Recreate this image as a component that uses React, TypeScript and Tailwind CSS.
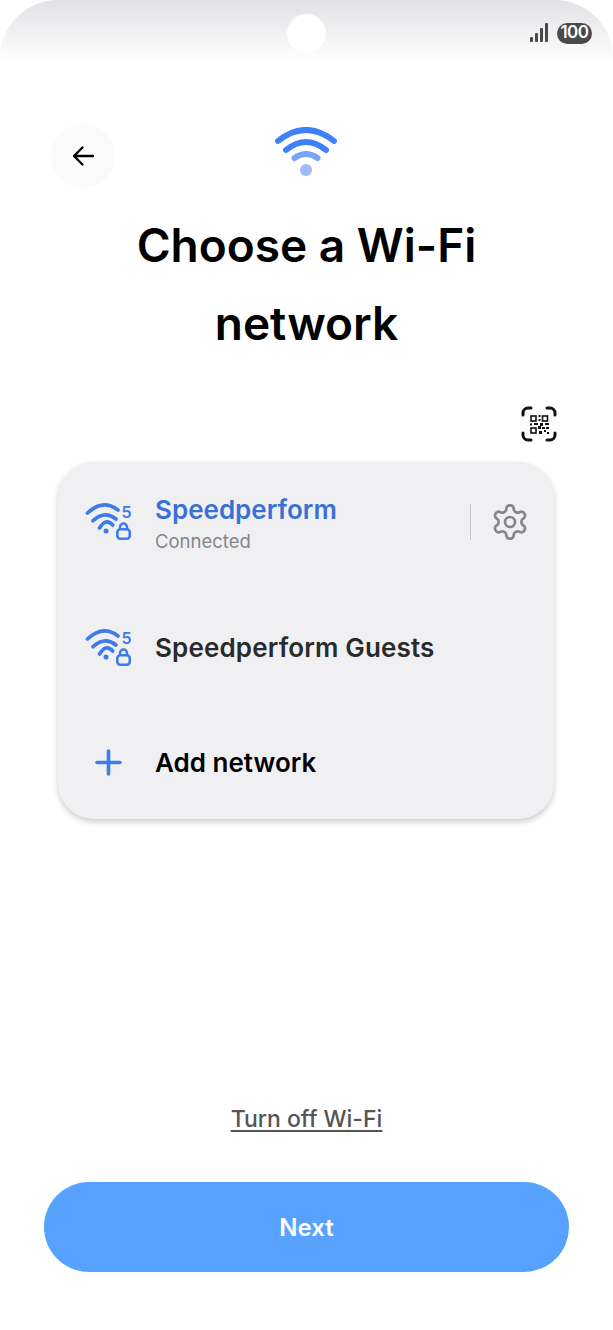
import React from "react";

function WifiFive() {
  return (
    <svg width="48" height="50" viewBox="0 0 48 50" fill="none" className="shrink-0">
      <g stroke="#3c7be8" strokeWidth="3.7" strokeLinecap="round">
        <path d="M2.5 16Q18 1.5 33 13" />
        <path d="M8 23.7Q20 13 31 22" />
        <path d="M14.5 31Q21 20.5 27.7 28" />
      </g>
      <circle cx="21" cy="34" r="2.5" fill="#3c7be8" />
      <text x="36.5" y="21" fill="#3c7be8" fontSize="16" fontWeight="600" fontFamily="Inter, sans-serif">5</text>
      <rect x="32.3" y="32.3" width="12.5" height="9.5" rx="3" stroke="#3c7be8" strokeWidth="2.6" />
      <path d="M35 32v-2a3.5 3.5 0 0 1 7 0v2" stroke="#3c7be8" strokeWidth="2.4" />
    </svg>
  );
}

function QrIcon() {
  return (
    <svg width="36" height="36" viewBox="0 0 36 36" fill="none">
      <g stroke="#111" strokeWidth="3" strokeLinecap="round">
        <path d="M2 9V7a5 5 0 0 1 5-5h3" />
        <path d="M26 2h3a5 5 0 0 1 5 5v2" />
        <path d="M34 27v2a5 5 0 0 1-5 5h-3" />
        <path d="M10 34H7a5 5 0 0 1-5-5v-2" />
      </g>
      <g stroke="#111" strokeWidth="1.6">
        <rect x="10" y="10" width="5" height="5" />
        <rect x="21.5" y="10" width="5" height="5" />
        <rect x="10" y="22" width="5" height="5" />
      </g>
      <g fill="#111">
        <rect x="17.5" y="9" width="2" height="2" />
        <rect x="17.5" y="13" width="2" height="2" />
        <rect x="9" y="17.5" width="2" height="2" />
        <rect x="13" y="17" width="4" height="2" />
        <rect x="19" y="17" width="3" height="3" />
        <rect x="24" y="17" width="4" height="2" />
        <rect x="17" y="20" width="3" height="3" />
        <rect x="21" y="21" width="3" height="2" />
        <rect x="25" y="21" width="3" height="2" />
        <rect x="18" y="25" width="3" height="3" />
        <rect x="23" y="24" width="2" height="2" />
        <rect x="26" y="26" width="2" height="2" />
      </g>
    </svg>
  );
}

function Gear() {
  return (
    <svg width="40" height="40" viewBox="0 0 24 24" fill="none" stroke="#85858a" strokeWidth="1.6" strokeLinecap="round" strokeLinejoin="round">
      <path d="M12.22 2h-.44a2 2 0 0 0-2 2v.18a2 2 0 0 1-1 1.73l-.43.25a2 2 0 0 1-2 0l-.15-.08a2 2 0 0 0-2.73.73l-.22.38a2 2 0 0 0 .73 2.73l.15.1a2 2 0 0 1 1 1.72v.51a2 2 0 0 1-1 1.74l-.15.09a2 2 0 0 0-.73 2.73l.22.38a2 2 0 0 0 2.73.73l.15-.08a2 2 0 0 1 2 0l.43.25a2 2 0 0 1 1 1.73V20a2 2 0 0 0 2 2h.44a2 2 0 0 0 2-2v-.18a2 2 0 0 1 1-1.73l.43-.25a2 2 0 0 1 2 0l.15.08a2 2 0 0 0 2.73-.73l.22-.39a2 2 0 0 0-.73-2.73l-.15-.08a2 2 0 0 1-1-1.74v-.5a2 2 0 0 1 1-1.74l.15-.09a2 2 0 0 0 .73-2.73l-.22-.38a2 2 0 0 0-2.73-.73l-.15.08a2 2 0 0 1-2 0l-.43-.25a2 2 0 0 1-1-1.73V4a2 2 0 0 0-2-2z" />
      <circle cx="12" cy="12" r="3" />
    </svg>
  );
}

export default function App() {
  return (
    <div className="w-[613px] h-[1330px] bg-white flex flex-col font-['Inter',sans-serif] overflow-hidden">
      {/* status bar */}
      <div className="h-[62px] shrink-0 rounded-t-[58px] bg-gradient-to-b from-[#e2e2e6] to-white grid grid-cols-3 pt-[14px]">
        <div />
        <div className="flex justify-center">
          <div className="w-[39px] h-[39px] rounded-full bg-white" />
        </div>
        <div className="flex justify-end items-center gap-[9px] pr-[21px] h-[38px]">
          <svg width="18" height="20" viewBox="0 0 18 20" fill="#4a4a4c">
            <rect x="0" y="14" width="3" height="5" rx="1" />
            <rect x="5" y="10" width="3" height="9" rx="1" />
            <rect x="10" y="5" width="3" height="14" rx="1" />
            <rect x="15" y="0" width="3" height="19" rx="1" />
          </svg>
          <div className="w-[35px] h-[21px] rounded-full bg-[#4a4a4c] text-white text-[17px] font-semibold flex items-center justify-center tracking-[-0.5px]">
            100
          </div>
        </div>
      </div>

      {/* header */}
      <div className="relative h-[126px] pt-[65px] pr-[2px] shrink-0 flex justify-center">
        <button className="absolute left-[51px] top-[62px] w-[64px] h-[64px] rounded-full bg-[#fbfbfb] flex items-center justify-center">
          <svg width="24" height="24" viewBox="0 0 24 24" fill="none" stroke="#000" strokeWidth="2.3" strokeLinecap="round" strokeLinejoin="round">
            <path d="M22 12H3" />
            <path d="M11.5 3.5L3 12l8.5 8.5" />
          </svg>
        </button>
        <svg width="62" height="50" viewBox="0 0 62 50" fill="none">
          <g strokeWidth="6" strokeLinecap="round">
            <path d="M3 14Q31 -8 59 14" stroke="#3c80fb" />
            <path d="M11 23Q31 7 51 23" stroke="#3c80fb" />
          </g>
          <path d="M19.5 31Q31 23 42.5 31" stroke="#76a4f8" strokeWidth="6" strokeLinecap="round" />
          <circle cx="31" cy="43" r="6" fill="#a0bcf4" />
        </svg>
      </div>

      {/* title */}
      <h1 className="mt-[18px] text-center text-[46px] leading-[78px] font-semibold text-black">
        Choose a Wi-Fi
        <br />
        network
      </h1>

      {/* QR */}
      <div className="flex justify-end pr-[56px] mt-[44px]">
        <QrIcon />
      </div>

      {/* card */}
      <div className="mx-[58px] mt-[20px] w-[496px] pb-[7px] rounded-[36px] bg-[#f0f0f3] shadow-[0_3px_6px_rgba(0,0,0,0.2)] flex flex-col">
        <div className="h-[120px] flex items-center pl-[27px] pr-[24px]">
          <WifiFive />
          <div className="ml-[22px] pt-[4px] flex-1 flex flex-col">
            <span className="text-[26px] leading-[34px] font-semibold text-[#3a70d6]">Speedperform</span>
            <span className="text-[18.5px] leading-[28px] text-[#85858a]">Connected</span>
          </div>
          <div className="w-px h-[36px] bg-[#c8c8cc] mr-[19px]" />
          <Gear />
        </div>
        <div className="h-[131px] flex items-center pl-[27px]">
          <WifiFive />
          <span className="ml-[22px] text-[26px] font-semibold text-[#2a2a2a] tracking-[0.15px]">Speedperform Guests</span>
        </div>
        <div className="h-[99px] flex items-center pl-[37px]">
          <svg width="27" height="27" viewBox="0 0 27 27" fill="none" stroke="#3c7eee" strokeWidth="3.6" strokeLinecap="round">
            <path d="M13.5 2v23M2 13.5h23" />
          </svg>
          <span className="ml-[33px] text-[26px] font-semibold text-black">Add network</span>
        </div>
      </div>

      <div className="flex-1 flex items-end justify-center pb-[46px]">
        <span className="text-[23px] font-medium text-[#555] underline decoration-2 underline-offset-[3px]">Turn off Wi-Fi</span>
      </div>

      <div className="px-[44px] pb-[58px]">
        <button className="w-full h-[90px] pt-[1px] rounded-[45px] bg-[#57a2ff] text-white text-[24px] font-semibold">Next</button>
      </div>
    </div>
  );
}
